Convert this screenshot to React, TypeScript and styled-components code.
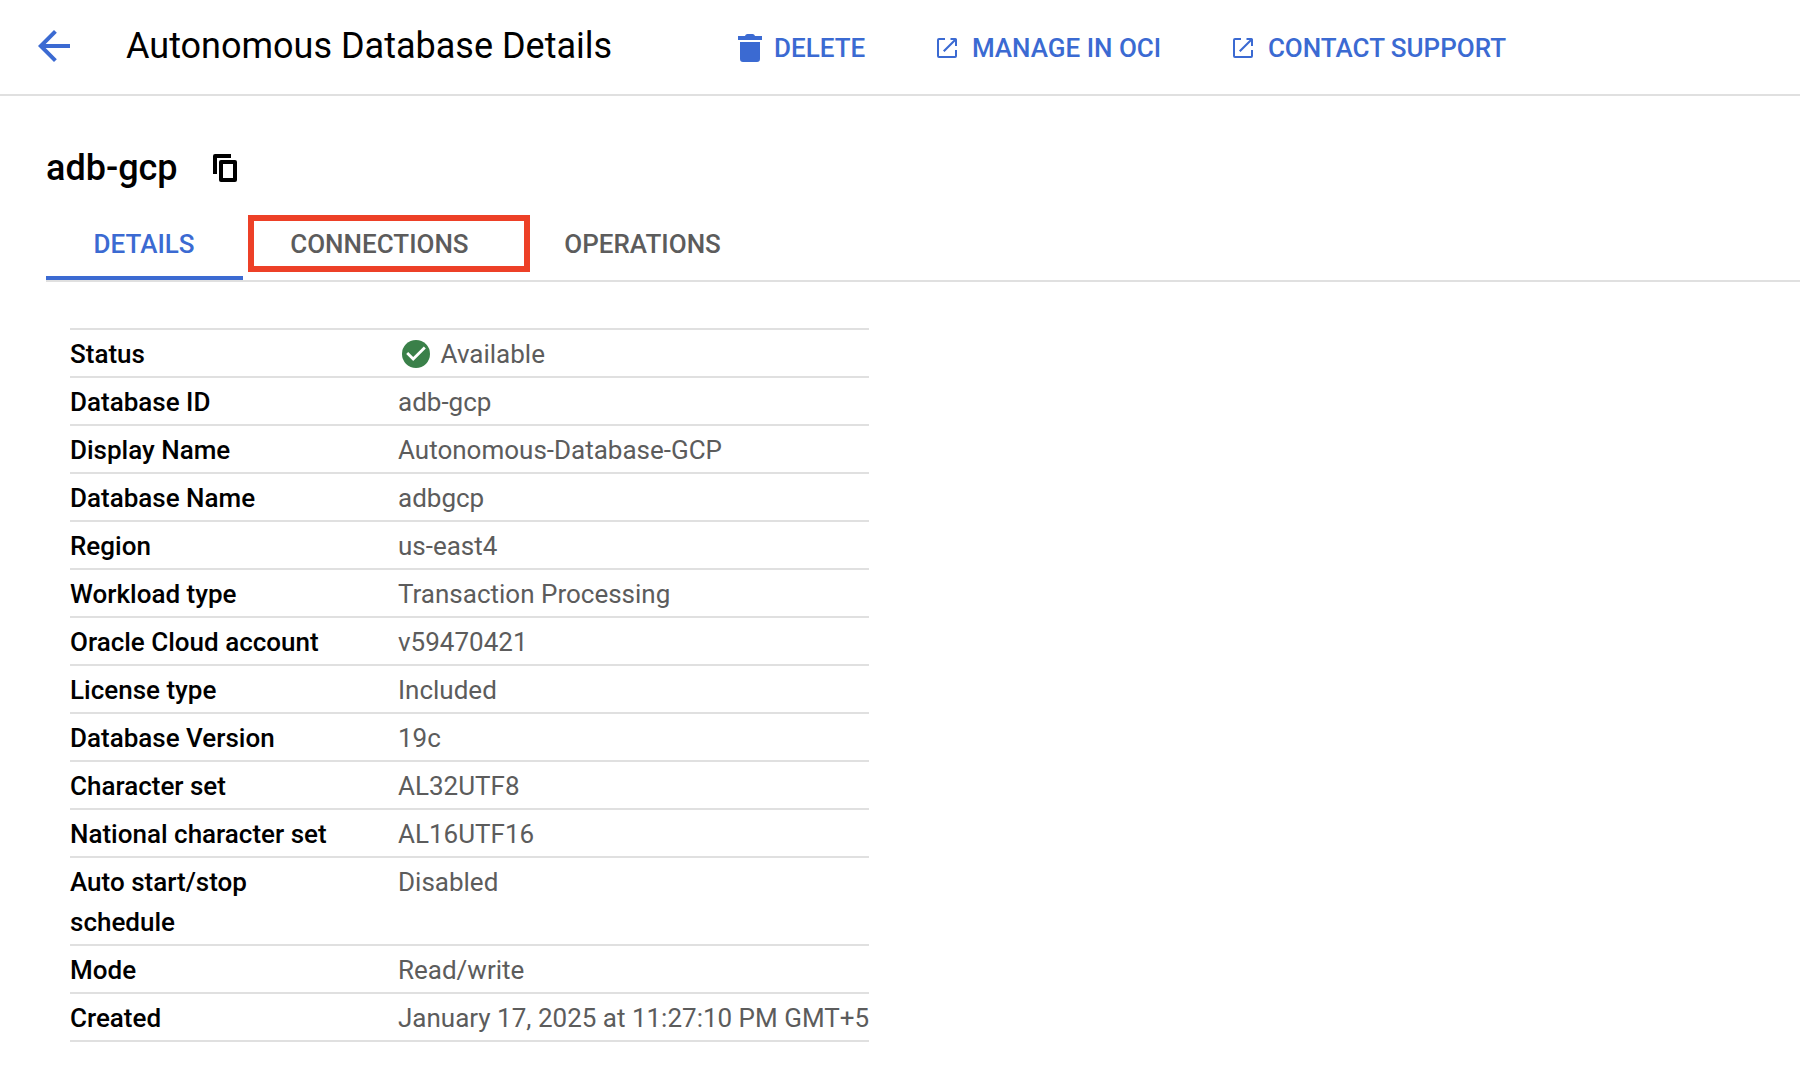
import React from 'react';
import styled, { createGlobalStyle } from 'styled-components';

const BLUE = '#3b6ad2';
const LINE = '#e0e0e0';
const MUTED = '#5c5c5c';

const GlobalStyle = createGlobalStyle`
  * { box-sizing: border-box; }
  body {
    margin: 0;
    background: #fff;
    color: #000;
    font-family: Roboto, "Liberation Sans", sans-serif;
    font-size: 26px;
  }
`;

const Page = styled.div`
  min-height: 1070px;
  overflow: hidden;
`;

const Header = styled.header`
  display: flex;
  align-items: center;
  height: 96px;
  padding: 0 0 2px 30px;
  border-bottom: 2px solid ${LINE};
`;

const BackButton = styled.button`
  display: flex;
  width: 48px;
  height: 48px;
  padding: 0;
  border: 0;
  background: none;
  color: ${BLUE};
`;

const PageTitle = styled.h1`
  width: 600px;
  margin: 0 0 0 48px;
  font-size: 36px;
  font-weight: 400;
  line-height: 44px;
  white-space: nowrap;
`;

const Actions = styled.nav`
  display: flex;
  align-items: center;
  gap: 63.8px;
  margin: 4px 0 0 6px;
`;

const Action = styled.a<{ $gap?: number }>`
  display: flex;
  align-items: center;
  gap: ${(p) => p.$gap ?? 6}px;
  color: ${BLUE};
  font-weight: 500;
  line-height: 36px;
  white-space: nowrap;
`;

const IconBox = styled.span`
  display: flex;
  align-items: center;
  justify-content: center;
  flex: none;
  width: 36px;
  height: 36px;
`;

const Content = styled.main`
  padding-left: 46px;
`;

const ResourceRow = styled.div`
  display: flex;
  align-items: center;
  gap: 29px;
  height: 112px;
  padding-top: 32px;
`;

const ResourceName = styled.h2`
  margin: 0;
  font-size: 36px;
  font-weight: 500;
  line-height: 44px;
`;

const Tabs = styled.div`
  display: flex;
  height: 74px;
  border-bottom: 2px solid ${LINE};
`;

const Tab = styled.div<{ $active?: boolean }>`
  position: relative;
  height: 72px;
  padding: 0 48.1px 0 47.6px;
  border-bottom: ${(p) => (p.$active ? `4px solid ${BLUE}` : '0')};
  color: ${(p) => (p.$active ? BLUE : MUTED)};
  font-weight: 500;
  line-height: 72px;
`;

const Highlight = styled.span`
  position: absolute;
  top: 7px;
  left: 5px;
  width: 282px;
  height: 57px;
  border: 6px solid #ed4027;
`;

const Table = styled.dl`
  width: 799px;
  margin: 46px 0 0 24px;
  border-top: 2px solid ${LINE};
`;

const Row = styled.div`
  display: grid;
  grid-template-columns: 328px 1fr;
  padding: 4px 0 2px;
  border-bottom: 2px solid ${LINE};
  line-height: 40px;
`;

const Label = styled.dt`
  padding-right: 60px;
  font-weight: 500;
`;

const Value = styled.dd`
  display: flex;
  align-items: center;
  align-self: start;
  gap: 6.6px;
  height: 40px;
  margin: 0;
  color: ${MUTED};
  white-space: nowrap;
`;

const BackIcon = () => (
  <svg width="48" height="48" viewBox="0 0 24 24" fill="currentColor">
    <path d="M20 11H7.83l5.59-5.59L12 4l-8 8 8 8 1.41-1.41L7.83 13H20v-2z" />
  </svg>
);

const TrashIcon = () => (
  <svg width="24" height="28" viewBox="0 0 24 28" fill="currentColor">
    <path d="M2 8h20v17a3 3 0 0 1-3 3H5a3 3 0 0 1-3-3V8zM0 2h7c.4-1.3 1.3-2 2.5-2h5c1.2 0 2.1.7 2.500 2h7v4H0V2z" />
  </svg>
);

const ExternalIcon = () => (
  <svg width="20" height="20" viewBox="0 0 20 20" fill="currentColor">
    <path d="M8 0v2H2v16h16v-6h2v6a2 2 0 0 1-2 2H2a2 2 0 0 1-2-2V2a2 2 0 0 1 2-2h6z" />
    <path d="M13.5 0H18.500a1.5 1.5 0 0 1 1.5 1.5V8h-2V3.4L7.5 14 6 12.5 16.6 2h-3.100V0z" />
  </svg>
);

const CopyIcon = () => (
  <svg width="24" height="28" viewBox="0 0 24 28" fill="currentColor">
    <path d="M18 0v4H4v16H0V2a2 2 0 0 1 2-2h16z" />
    <path
      fillRule="evenodd"
      d="M8 6h14a2 2 0 0 1 2 2v18a2 2 0 0 1-2 2H8a2 2 0 0 1-2-2V8a2 2 0 0 1 2-2zm2 4v14h10V10H10z"
    />
  </svg>
);

const CheckIcon = () => (
  <svg width="28" height="28" viewBox="2 2 20 20">
    <circle cx="12" cy="12" r="10" fill="#3a8049" />
    <path fill="#fff" d="M10 17l-5-5 1.41-1.41L10 14.17l7.59-7.59L19 8l-9 9z" />
  </svg>
);

const details: { label: string; value: string; ok?: boolean }[] = [
  { label: 'Status', value: 'Available', ok: true },
  { label: 'Database ID', value: 'adb-gcp' },
  { label: 'Display Name', value: 'Autonomous-Database-GCP' },
  { label: 'Database Name', value: 'adbgcp' },
  { label: 'Region', value: 'us-east4' },
  { label: 'Workload type', value: 'Transaction Processing' },
  { label: 'Oracle Cloud account', value: 'v59470421' },
  { label: 'License type', value: 'Included' },
  { label: 'Database Version', value: '19c' },
  { label: 'Character set', value: 'AL32UTF8' },
  { label: 'National character set', value: 'AL16UTF16' },
  { label: 'Auto start/stop schedule', value: 'Disabled' },
  { label: 'Mode', value: 'Read/write' },
  { label: 'Created', value: 'January 17, 2025 at 11:27:10 PM GMT+5' },
];

export default function App() {
  return (
    <Page>
      <GlobalStyle />
      <Header>
        <BackButton aria-label="Back">
          <BackIcon />
        </BackButton>
        <PageTitle>Autonomous Database Details</PageTitle>
        <Actions>
          <Action>
            <IconBox>
              <TrashIcon />
            </IconBox>
            DELETE
          </Action>
          <Action $gap={6.9}>
            <IconBox>
              <ExternalIcon />
            </IconBox>
            MANAGE IN OCI
          </Action>
          <Action $gap={6.9}>
            <IconBox>
              <ExternalIcon />
            </IconBox>
            CONTACT SUPPORT
          </Action>
        </Actions>
      </Header>
      <Content>
        <ResourceRow>
          <ResourceName>adb-gcp</ResourceName>
          <IconBox>
            <CopyIcon />
          </IconBox>
        </ResourceRow>
        <Tabs>
          <Tab $active>DETAILS</Tab>
          <Tab>
            CONNECTIONS
            <Highlight />
          </Tab>
          <Tab>OPERATIONS</Tab>
        </Tabs>
        <Table>
          {details.map((d) => (
            <Row key={d.label}>
              <Label>{d.label}</Label>
              <Value>
                {d.ok && (
                  <IconBox>
                    <CheckIcon />
                  </IconBox>
                )}
                {d.value}
              </Value>
            </Row>
          ))}
        </Table>
      </Content>
    </Page>
  );
}
